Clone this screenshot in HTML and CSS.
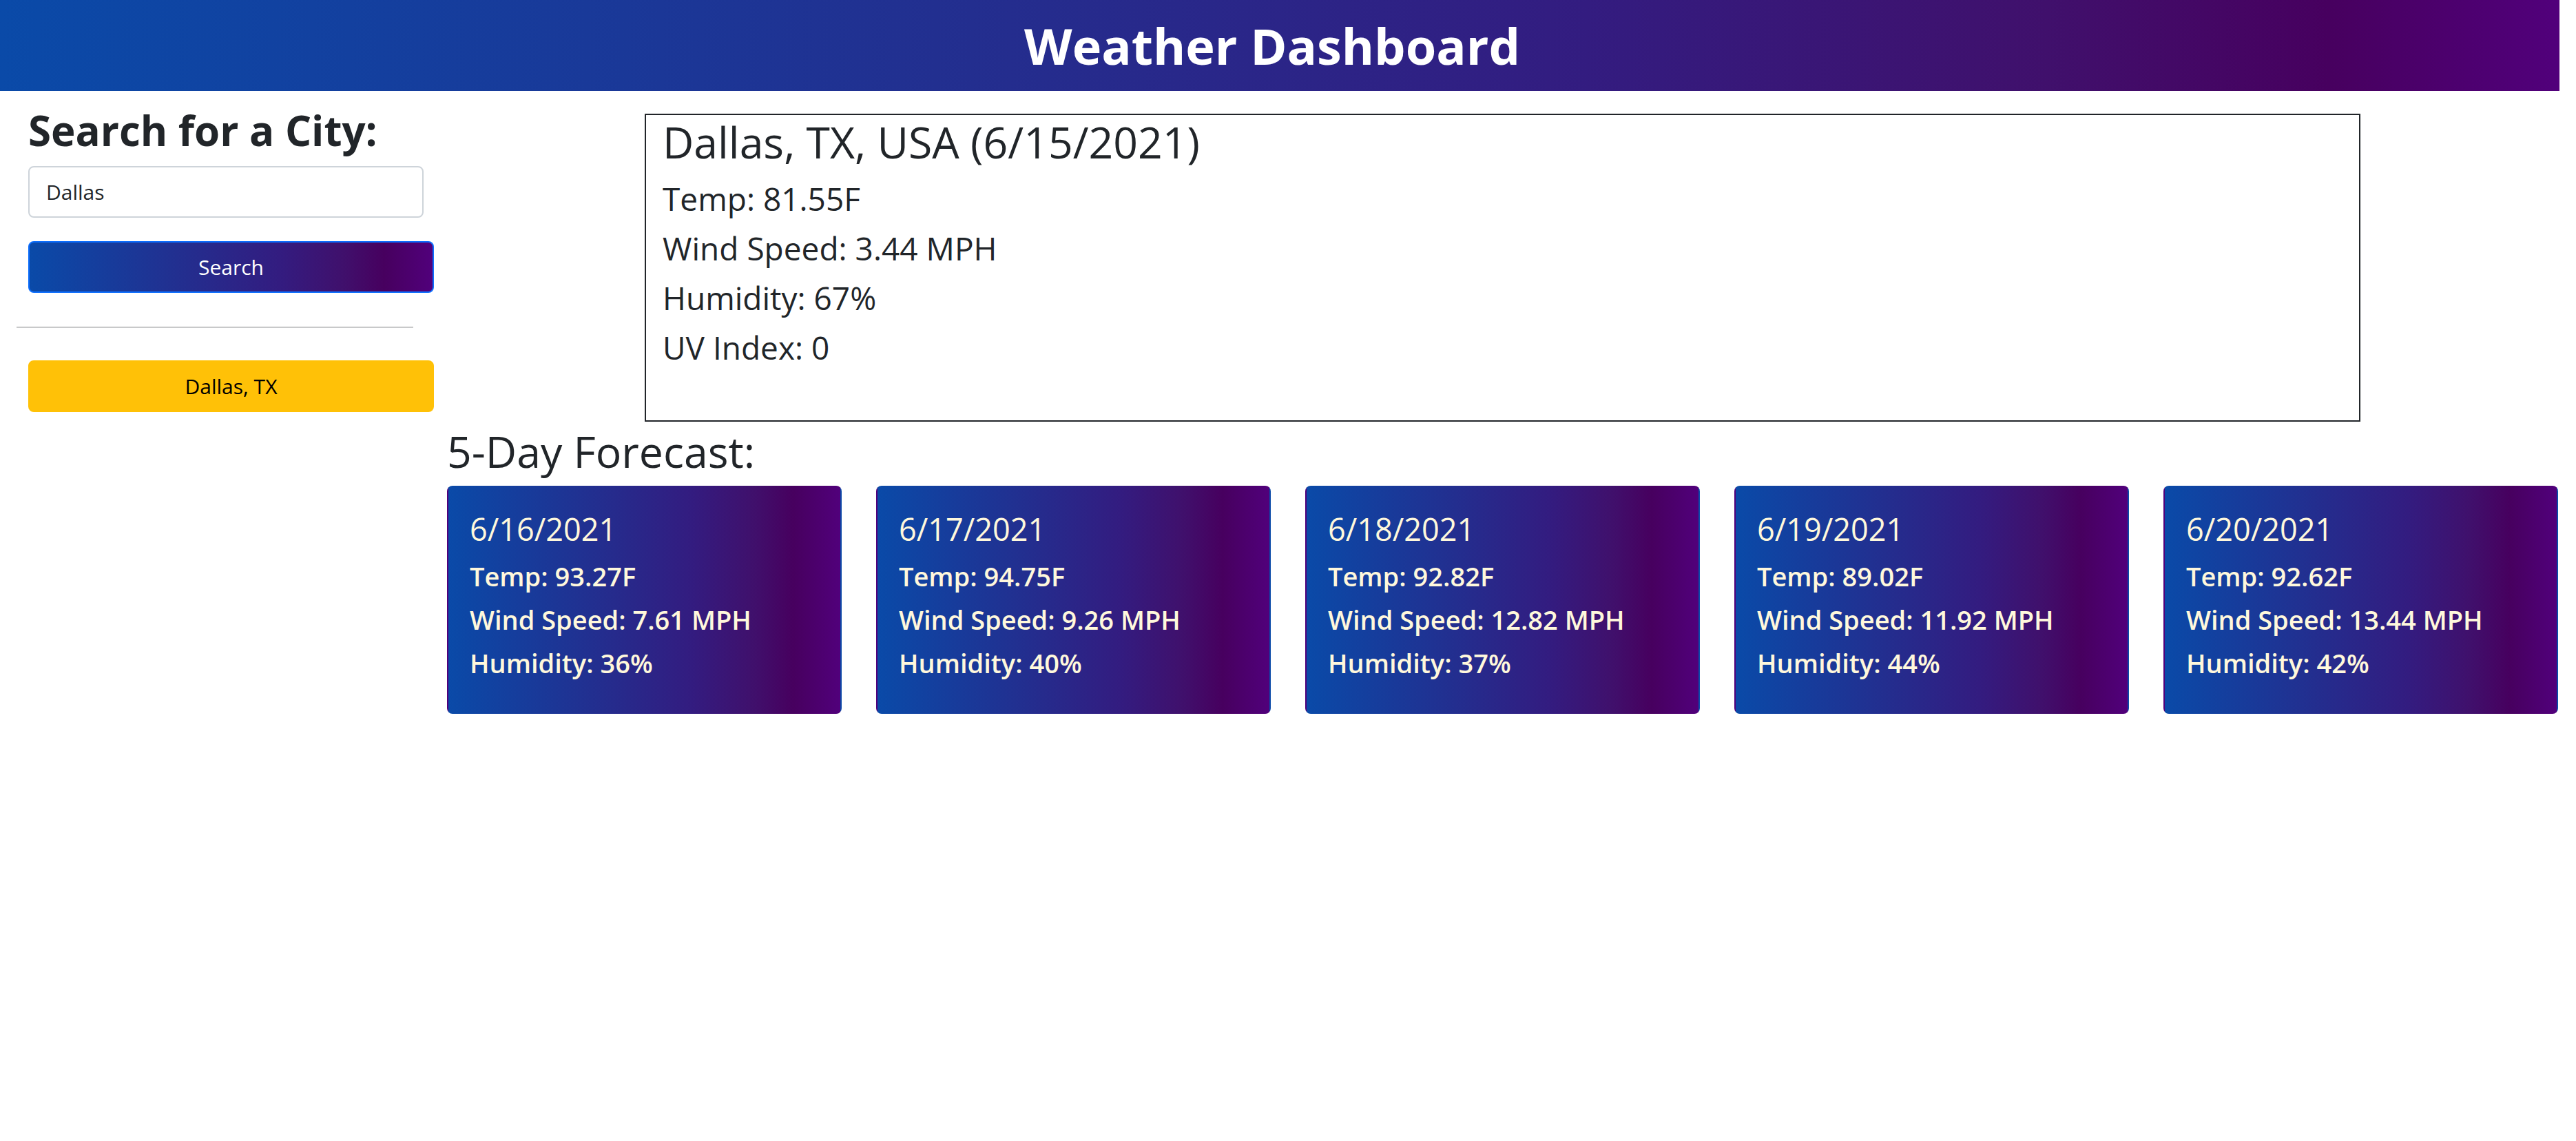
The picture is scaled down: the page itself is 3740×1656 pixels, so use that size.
FILE: index.html
```html
<!DOCTYPE html>
<html lang="en">
<head>
<meta charset="utf-8">
<title>Weather Dashboard</title>
<link rel="stylesheet" href="styles.css">
</head>
<body>
<div class="page">
  <header class="topbar">
    <h1 class="brand">Weather Dashboard</h1>
  </header>
  <div class="layout">
    <aside class="sidebar">
      <h3 class="search-title">Search for a City:</h3>
      <input class="city-input" type="text" value="Dallas">
      <button class="btn btn-search" type="button">Search</button>
      <hr class="divider">
      <button class="btn btn-history" type="button">Dallas, TX</button>
    </aside>
    <main class="content">
      <section class="current">
        <h2 class="current-title">Dallas, TX, USA (6/15/2021)</h2>
        <p class="current-line">Temp: 81.55F</p>
        <p class="current-line">Wind Speed: 3.44 MPH</p>
        <p class="current-line">Humidity: 67%</p>
        <p class="current-line">UV Index: 0</p>
      </section>
      <h3 class="forecast-title">5-Day Forecast:</h3>
      <div class="forecast">
        <div class="card">
          <h4 class="card-date">6/16/2021</h4>
          <p class="card-line">Temp: 93.27F</p>
          <p class="card-line">Wind Speed: 7.61 MPH</p>
          <p class="card-line">Humidity: 36%</p>
        </div>
        <div class="card">
          <h4 class="card-date">6/17/2021</h4>
          <p class="card-line">Temp: 94.75F</p>
          <p class="card-line">Wind Speed: 9.26 MPH</p>
          <p class="card-line">Humidity: 40%</p>
        </div>
        <div class="card">
          <h4 class="card-date">6/18/2021</h4>
          <p class="card-line">Temp: 92.82F</p>
          <p class="card-line">Wind Speed: 12.82 MPH</p>
          <p class="card-line">Humidity: 37%</p>
        </div>
        <div class="card">
          <h4 class="card-date">6/19/2021</h4>
          <p class="card-line">Temp: 89.02F</p>
          <p class="card-line">Wind Speed: 11.92 MPH</p>
          <p class="card-line">Humidity: 44%</p>
        </div>
        <div class="card">
          <h4 class="card-date">6/20/2021</h4>
          <p class="card-line">Temp: 92.62F</p>
          <p class="card-line">Wind Speed: 13.44 MPH</p>
          <p class="card-line">Humidity: 42%</p>
        </div>
      </div>
    </main>
  </div>
</div>
</body>
</html>
```
FILE: styles.css
```css
* { box-sizing: border-box; }

html, body {
  margin: 0;
  padding: 0;
  background: #ffffff;
}

body {
  font-family: "Open Sans", "Noto Sans", "DejaVu Sans", sans-serif;
  color: #212529;
}

.page {
  width: 3716px;
}

.topbar {
  height: 132px;
  padding-right: 22px;
  display: flex;
  align-items: center;
  justify-content: center;
  background: linear-gradient(to right, #0a4aa8 0%, #232e8f 38%, #331c80 62%, #40106c 80%, #47005f 91%, #51007b 100%);
}

.brand {
  margin: 0;
  font-size: 72px;
  line-height: 132px;
  font-weight: 700;
  color: #ffffff;
}

.layout {
  display: flex;
  align-items: flex-start;
}

.sidebar {
  width: 649px;
  flex: none;
  padding: 21px 19px 0 41px;
  display: flex;
  flex-direction: column;
}

.search-title {
  margin: 0;
  font-size: 60px;
  line-height: 72px;
  font-weight: 700;
  color: #212529;
}

.city-input {
  margin-top: 16px;
  width: 574px;
  height: 75px;
  padding: 0 24px;
  border: 2px solid #ced4da;
  border-radius: 8px;
  font-family: inherit;
  font-size: 30px;
  color: #212529;
  background: #fff;
  outline: none;
}

.btn {
  display: block;
  width: 589px;
  height: 75px;
  border-radius: 8px;
  font-family: inherit;
  font-size: 30px;
  text-align: center;
  padding: 0;
  cursor: pointer;
}

.btn-search {
  margin-top: 34px;
  border: 2px solid #0d6efd;
  color: #ffffff;
  background: linear-gradient(to right, #0a4aa8 0%, #232e8f 38%, #331c80 62%, #40106c 78%, #47005f 88%, #51007b 100%);
}

.divider {
  margin: 49px 0 0 -17px;
  width: 576px;
  height: 2px;
  border: 0;
  background: #c8c9ca;
}

.btn-history {
  margin-top: 47px;
  border: 2px solid #ffc107;
  background: #ffc107;
  color: #000000;
}

.content {
  flex: 1;
  padding-right: 2px;
  display: flex;
  flex-direction: column;
}

.current {
  margin: 33px auto 0;
  width: 2491px;
  border: 2px solid #212529;
  padding: 3px 24px 70px;
}

.current-title {
  margin: 0 0 10px;
  font-size: 62.5px;
  line-height: 72px;
  font-weight: 400;
}

.current-line {
  margin: 0;
  font-size: 46px;
  line-height: 72px;
  font-weight: 500;
}

.forecast-title {
  margin: 7px 0 0;
  font-size: 62.5px;
  line-height: 72px;
  font-weight: 400;
}

.forecast {
  margin-top: 14px;
  display: flex;
  gap: 50px;
}

.card {
  flex: 1;
  min-width: 0;
  height: 331px;
  border: 2px solid transparent;
  border-radius: 8px;
  padding: 30px 31px 40px;
  color: #fff8dc;
  background: linear-gradient(to right, #0a4aa8 0%, #232e8f 38%, #331c80 62%, #40106c 78%, #47005f 88%, #51007b 100%);
}

.card-date {
  margin: 0 0 6px;
  font-size: 45px;
  line-height: 62px;
  font-weight: 500;
}

.card-line {
  margin: 0;
  font-size: 38px;
  line-height: 63px;
  font-weight: 600;
}
```
